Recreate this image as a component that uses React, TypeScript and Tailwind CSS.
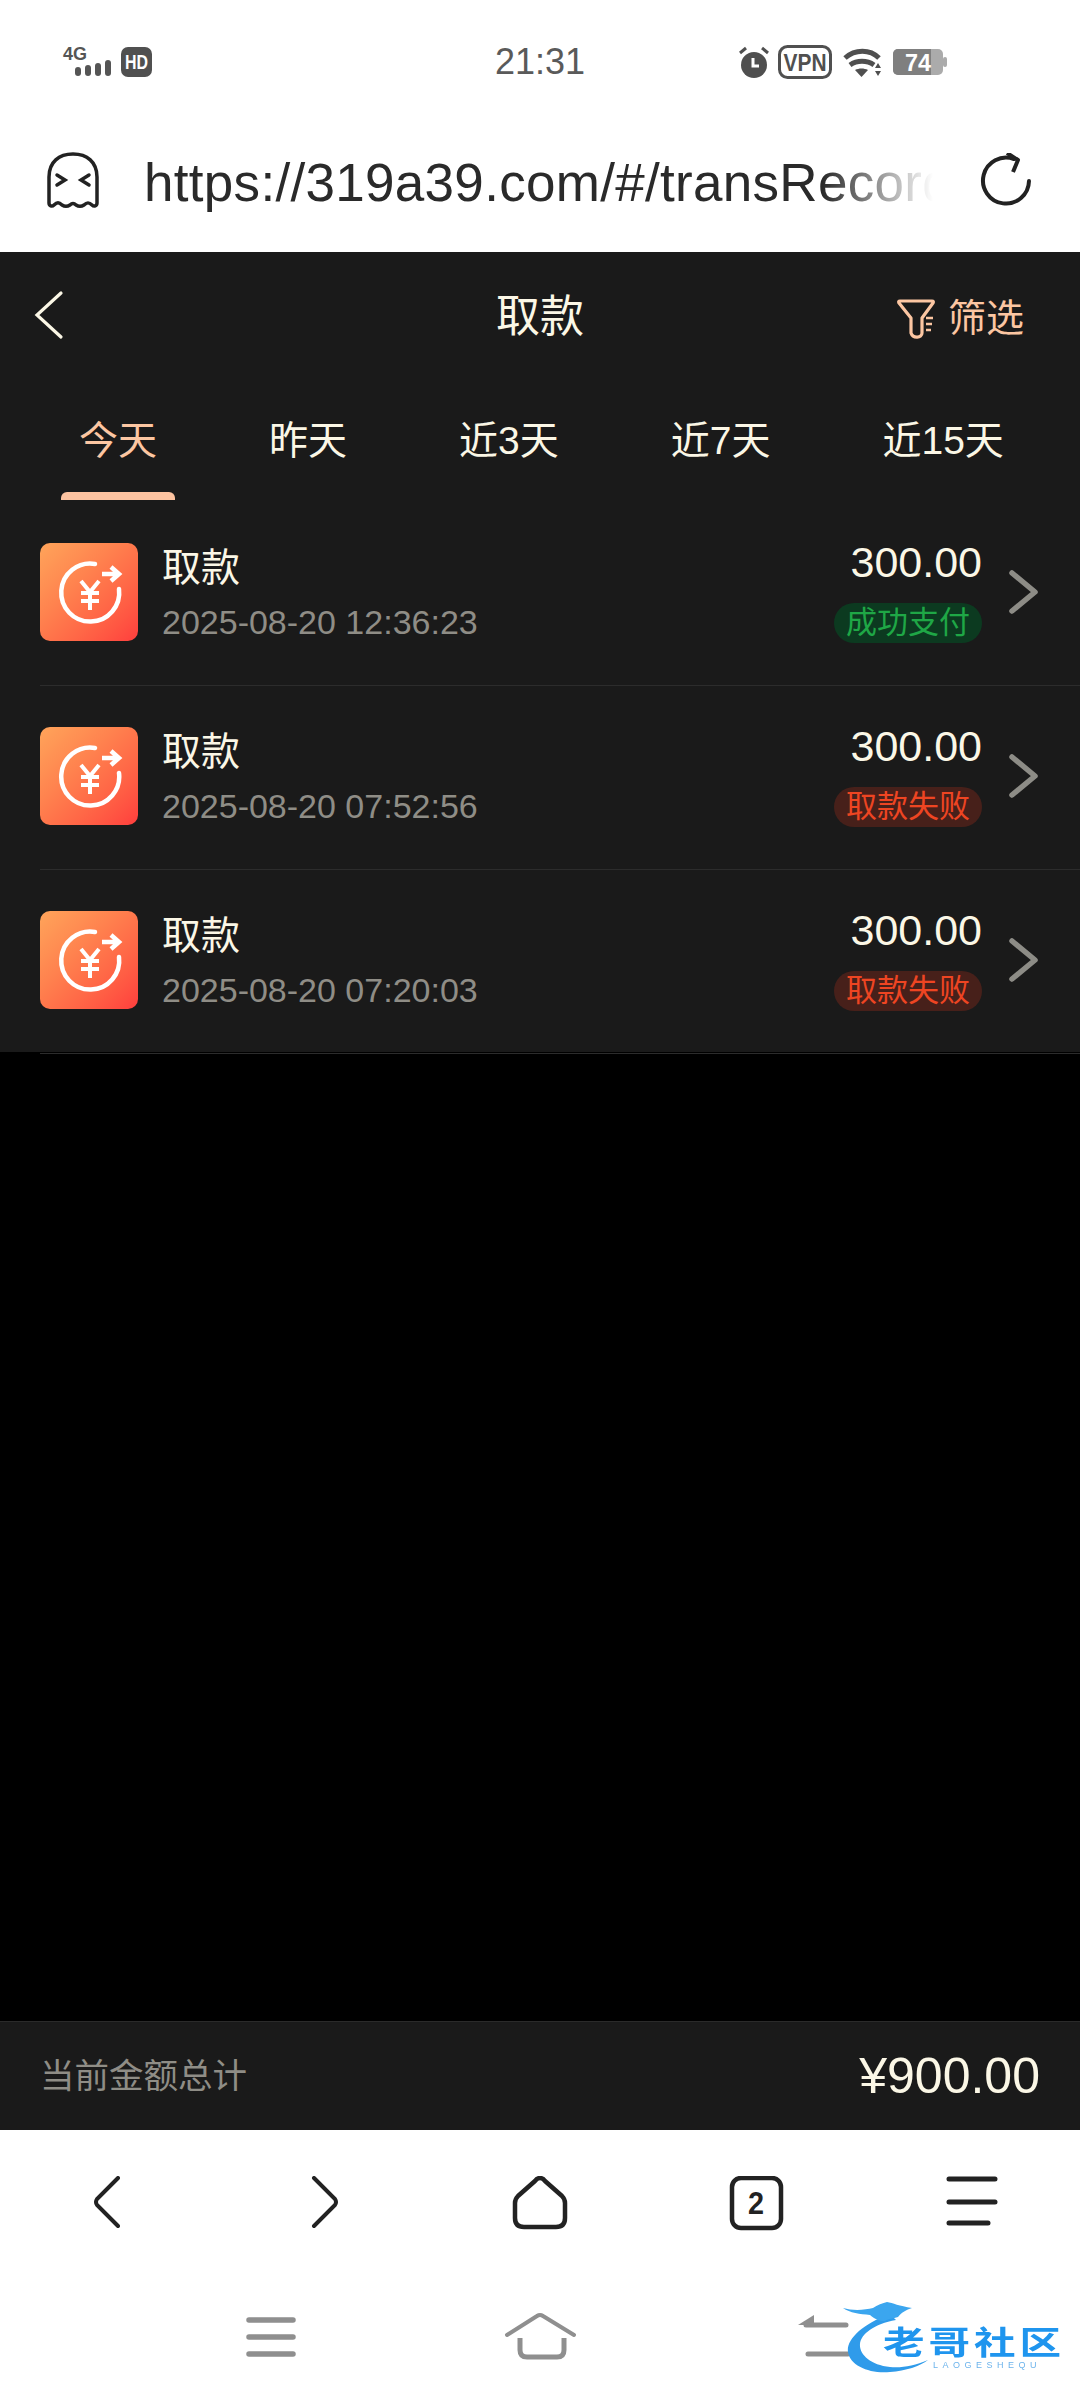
import React from "react";

const sans = "font-['Liberation_Sans','Noto_Sans_CJK_SC',sans-serif]";

function Status() {
  return (
    <div className="h-[120px] flex items-start relative text-[#4f4f4f]">
      <div className="absolute left-[60px] top-[44px] w-[96px] h-[36px]">
        <svg width="96" height="36" viewBox="0 0 96 36">
          <text x="3" y="16" fontSize="18" fontWeight="700" fill="#555" fontFamily="Liberation Sans" textLength="24" lengthAdjust="spacingAndGlyphs">4G</text>
          <rect x="15" y="23" width="6" height="9" rx="3" fill="#555" />
          <rect x="25" y="21" width="6" height="11" rx="3" fill="#555" />
          <rect x="35" y="19" width="6" height="13" rx="3" fill="#555" />
          <rect x="45" y="16" width="6" height="16" rx="3" fill="#555" />
          <rect x="61" y="3" width="31" height="30" rx="7" fill="#505050" />
          <text x="76.5" y="25" textAnchor="middle" fontSize="20" fontWeight="700" fill="#fff" fontFamily="Liberation Sans" textLength="23" lengthAdjust="spacingAndGlyphs">HD</text>
        </svg>
      </div>
      <div className={`w-full text-center pt-[44px] text-[36px] leading-[36px] text-[#5a5a5a] ${sans}`}>21:31</div>
      <div className="absolute left-[736px] top-[44px]">
        <svg width="216" height="40" viewBox="0 0 216 40">
          <circle cx="18" cy="21" r="13" fill="#4f4f4f" />
          <path d="M17 14v8h6" stroke="#fff" strokeWidth="3" fill="none" />
          <path d="M4 9l6-5M32 9l-6-5" stroke="#4f4f4f" strokeWidth="3" />
          <rect x="43.5" y="2.5" width="51" height="31" rx="8" fill="none" stroke="#505050" strokeWidth="3" />
          <text x="69" y="27" textAnchor="middle" fontSize="23" fontWeight="700" fill="#505050" fontFamily="Liberation Sans" textLength="43" lengthAdjust="spacingAndGlyphs">VPN</text>
          <path d="M109 14c10-9 25-9 34 0" stroke="#4f4f4f" strokeWidth="5" fill="none" />
          <path d="M114 21c7-5 17-5 24 0" stroke="#4f4f4f" strokeWidth="5" fill="none" />
          <path d="M119 26c4-2 9-2 13 0l-6.500 7z" fill="#4f4f4f" />
          <path d="M139 24l3-5 3 5zM139 27h6l-3 5z" fill="#4f4f4f" />
          <rect x="157" y="5" width="50" height="26" rx="5" fill="#ababab" />
          <path d="M162 5h33v26h-33a5 5 0 0 1-5-5v-16a5 5 0 0 1 5-5z" fill="#7f7f7f" />
          <rect x="207" y="13" width="4" height="10" rx="2" fill="#ababab" />
          <text x="182" y="27" textAnchor="middle" fontSize="24" fontWeight="700" fill="#fff" fontFamily="Liberation Sans" textLength="26" lengthAdjust="spacingAndGlyphs">74</text>
        </svg>
      </div>
    </div>
  );
}

function UrlBar() {
  return (
    <div className="h-[132px] flex items-start pl-[46px] bg-white">
      <svg width="54" height="58" viewBox="0 0 54 58" className="mt-[32px] shrink-0">
        <path d="M3 51V25C3 10 13 2 27 2s24 8 24 23v26c0 3-3 4-5 2-3-3-5-3-8 0-3 2-5 2-8 0-2-2-4-2-6 0-3 2-5 2-8 0-3-3-5-3-8 0-2 2-5 1-5-2z" fill="none" stroke="#222" strokeWidth="3.5" strokeLinejoin="round" />
        <path d="M11 23l8 5-8 5M43 23l-8 5 8 5" fill="none" stroke="#222" strokeWidth="3.5" strokeLinecap="round" />
      </svg>
      <div className={`ml-[44px] w-[789px] mt-[32px] overflow-hidden whitespace-nowrap text-[53px] tracking-[0.3px] leading-[62px] text-[#2a2a2a] ${sans} [mask-image:linear-gradient(to_right,#000_86%,transparent_100%)]`}>
        https://319a39.com/#/transRecord
      </div>
      <svg width="52" height="54" viewBox="0 0 52 54" className="ml-[47px] mt-[33px] shrink-0">
        <path d="M34 6A23 23 0 1 0 49 28" fill="none" stroke="#222" strokeWidth="4" strokeLinecap="round" />
        <path d="M27 0l11 7-5 12" fill="none" stroke="#222" strokeWidth="4" strokeLinejoin="round" />
      </svg>
    </div>
  );
}

function Tab({ label, active }: { label: string; active?: boolean }) {
  return (
    <div className={`relative h-[118px] pt-[34px] text-[39px] leading-[50px] whitespace-nowrap ${active ? "text-[#fcc6a2]" : "text-[#fbf7e6]"}`}>
      {label}
      {active && <div className="absolute -left-[18px] -right-[18px] bottom-0 h-[8px] rounded-t-[6px] bg-[#fdc3a0]" />}
    </div>
  );
}

function TxIcon() {
  return (
    <div className="w-[98px] h-[98px] rounded-[10px] shrink-0 bg-gradient-to-br from-[#ffa45a] to-[#ff3d3d]">
      <svg width="98" height="98" viewBox="0 0 98 98">
        <path d="M55 21A29 29 0 1 0 79 46" fill="none" stroke="#fff" strokeWidth="4.5" strokeLinecap="round" />
        <path d="M62 31h16M71 24l8 7-8 7" fill="none" stroke="#fff" strokeWidth="4.5" />
        <path d="M41 38l9 11 9-11M41 50h18M41 58h18M50 49v18" fill="none" stroke="#fff" strokeWidth="4" />
      </svg>
    </div>
  );
}

function Row({ time, status, ok }: { time: string; status: string; ok?: boolean }) {
  return (
    <div className="h-[184px] pl-[40px] relative flex items-center">
      <TxIcon />
      <div className="ml-[24px] flex-1 mt-[2px]">
        <div className="text-[39px] leading-[50px] -mt-[2px] text-[#fbf7e6]">取款</div>
        <div className="text-[34px] leading-[40px] mt-[9px] text-[#8f8d86]">{time}</div>
      </div>
      <div className="flex flex-col items-end">
        <div className="text-[43px] leading-[46px] -mt-[2px] text-[#fbf7e6]">300.00</div>
        <div className={`mt-[18px] h-[40px] px-[12px] rounded-full text-[31px] leading-[40px] ${ok ? "bg-[#0c3a20] text-[#1fa746]" : "bg-[#47201a] text-[#ee4522]"}`}>{status}</div>
      </div>
      <svg width="32" height="46" viewBox="0 0 32 46" className="ml-[26px] mr-[40px] shrink-0">
        <path d="M4 4l23 19L4 42" fill="none" stroke="#8d8c86" strokeWidth="5.5" strokeLinecap="round" strokeLinejoin="round" />
      </svg>
      <div className="absolute left-[40px] right-0 -bottom-[2px] h-px bg-[#2c2c2c]" />
    </div>
  );
}

function Watermark() {
  return (
    <div className="absolute left-[840px] top-[2300px] w-[240px] h-[100px]">
      <svg width="240" height="100" viewBox="0 0 240 100" className="absolute inset-0 blur-[0.7px]">
        <path d="M50 14C22 24 6 40 8 52C10 66 30 74 50 72C66 71 80 66 88 60C74 66 62 68 50 67C30 65 19 54 20 44C21 34 34 24 56 20Z" fill="#2f9bea" />
        <path d="M3 8c10 3 22 2 30 0 4-3 10-5 14-6 6 1 12 4 25 6-6 2-10 4-14 9-5 2-9 1-13 4-6 0-10-2-15-6-10-1-20-2-27-7z" fill="#3ba6ef" />
      </svg>
      <div className="absolute left-[43px] top-[24px] whitespace-nowrap text-[32px] leading-[32px] font-bold tracking-[3px] text-[#1f95ee] blur-[0.5px] font-['Noto_Sans_CJK_SC',sans-serif] scale-x-[1.3] origin-left">老哥社区</div>
      <div className={`absolute left-[93px] top-[60px] whitespace-nowrap text-[9px] leading-[11px] tracking-[4.500px] text-[#6db4ec] blur-[0.3px] ${sans}`}>LAOGESHEQU</div>
    </div>
  );
}

export default function App() {
  return (
    <div className={`relative w-[1080px] h-[2400px] flex flex-col bg-black overflow-hidden ${sans}`}>
      <div className="bg-white"><Status /><UrlBar /></div>

      <div className="bg-[#1a1a1a]">
        <div className="h-[130px] flex items-start relative">
          <svg width="32" height="50" viewBox="0 0 32 50" className="ml-[32px] mt-[38px]">
            <path d="M29 3L5 25l24 22" fill="none" stroke="#fbf7e6" strokeWidth="3.2" strokeLinecap="round" />
          </svg>
          <div className="absolute inset-x-0 top-[38px] text-center text-[44px] leading-[54px] text-[#fbf7e6]">取款</div>
          <div className="absolute left-[894px] top-[43px] flex items-center">
            <svg width="42" height="42" viewBox="0 0 42 42">
              <path d="M6 4h32q2 0 1 2L28 21v15c0 5-9 6-11 0V21L5 6q-1-2 1-2z" fill="none" stroke="#fcc6a2" strokeWidth="3.2" strokeLinejoin="round" />
              <path d="M32 21h7M32 27h6M32 33h5" stroke="#fcc6a2" strokeWidth="2.600" />
            </svg>
            <div className="ml-[12px] text-[38px] leading-[46px] text-[#fcc6a2]">筛选</div>
          </div>
        </div>
        <div className="h-[118px] flex items-start pl-[79px] gap-[112px]">
          <Tab label="今天" active />
          <Tab label="昨天" />
          <Tab label="近3天" />
          <Tab label="近7天" />
          <Tab label="近15天" />
        </div>
        <div>
          <Row time="2025-08-20 12:36:23" status="成功支付" ok />
          <Row time="2025-08-20 07:52:56" status="取款失败" />
          <Row time="2025-08-20 07:20:03" status="取款失败" />
        </div>
      </div>

      <div className="flex-1 bg-black" />

      <div className="h-[109px] bg-[#1a1a1a] border-t border-[#2a2a2a] flex items-center justify-between pl-[40px] pr-[40px]">
        <div className="text-[34.500px] leading-[44px] text-[#8f8d86]">当前金额总计</div>
        <div className="text-[50px] leading-[56px] text-[#fbf7e6]">¥900.00</div>
      </div>

      <div className="h-[270px] bg-white">
        <div className="h-[140px] flex items-start">
          <svg width="1080" height="56" viewBox="0 0 1080 56" className="mt-[46px]">
            <path d="M118 2L97 23q-2 3 0 6L118 50" fill="none" stroke="#222" strokeWidth="4" strokeLinecap="round" />
            <path d="M314 2L335 23q2 3 0 6L314 50" fill="none" stroke="#222" strokeWidth="4" strokeLinecap="round" />
            <path d="M540 2q-3 0-5 3L518 20q-3 3-3 7V42q0 9 9 9h32q9 0 9-9V27q0-4-3-7L545 5q-2-3-5-3z" fill="none" stroke="#222" strokeWidth="4.500" strokeLinejoin="round" />
            <rect x="732" y="2" width="49" height="50" rx="9" fill="none" stroke="#222" strokeWidth="4.500" />
            <text x="756" y="38" textAnchor="middle" fontSize="32" fontWeight="700" fill="#222" fontFamily="Liberation Sans" textLength="16" lengthAdjust="spacingAndGlyphs">2</text>
            <path d="M949 3h46M949 26h46M949 47h39" stroke="#222" strokeWidth="5" strokeLinecap="round" />
          </svg>
        </div>
        <div className="h-[130px] flex items-start">
          <svg width="1080" height="60" viewBox="0 0 1080 60" className="mt-[30px]">
            <path d="M249 20h44M249 37h44M249 54h44" stroke="#8f8f8f" strokeWidth="5.500" strokeLinecap="round" />
            <path d="M507 35L537 16q3-2 6 0L574 35" fill="none" stroke="#8f8f8f" strokeWidth="4" strokeLinecap="round" />
            <path d="M520 38v12q0 7 7 7h30q7 0 7-7V38" fill="none" stroke="#8f8f8f" strokeWidth="5" />
            <path d="M806 25h40M808 54h40" fill="none" stroke="#8f8f8f" strokeWidth="5" strokeLinecap="round" />
            <path d="M798 25l16-10v10z" fill="#8f8f8f" />
          </svg>
        </div>
      </div>
      <Watermark />
    </div>
  );
}
